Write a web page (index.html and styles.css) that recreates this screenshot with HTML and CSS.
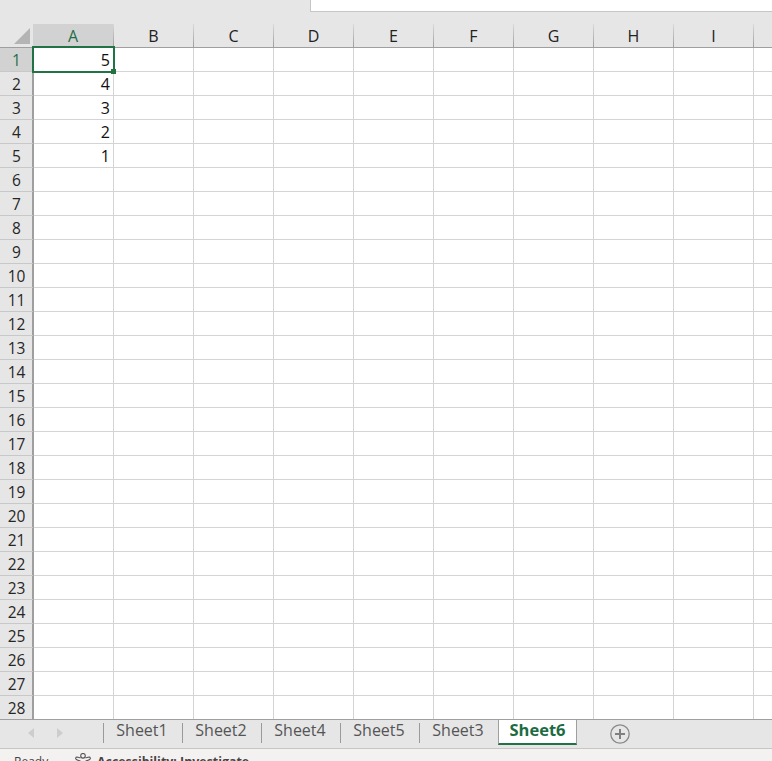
FILE: index.html
```html
<!DOCTYPE html>
<html lang="en">
<head>
<meta charset="utf-8">
<title>Workbook</title>
<link rel="stylesheet" href="styles.css">
</head>
<body>
<div class="app">
  <div class="top"><div class="formula"></div></div>
  <div class="cols">
    <div class="corner"><svg width="16" height="16" viewBox="0 0 16 16"><path d="M16 0V16H0Z" fill="#b4b4b4"/></svg></div>
    <div class="col sel">A</div><div class="col">B</div><div class="col">C</div><div class="col">D</div><div class="col">E</div><div class="col">F</div><div class="col">G</div><div class="col">H</div><div class="col">I</div><div class="col rest"></div>
  </div>
  <div class="sheet">
    <div class="row"><div class="rh sel">1</div><div class="cell active">5<span class="handle"></span></div></div>
    <div class="row"><div class="rh">2</div><div class="cell">4</div></div>
    <div class="row"><div class="rh">3</div><div class="cell">3</div></div>
    <div class="row"><div class="rh">4</div><div class="cell">2</div></div>
    <div class="row"><div class="rh">5</div><div class="cell">1</div></div>
    <div class="row"><div class="rh">6</div></div>
    <div class="row"><div class="rh">7</div></div>
    <div class="row"><div class="rh">8</div></div>
    <div class="row"><div class="rh">9</div></div>
    <div class="row"><div class="rh">10</div></div>
    <div class="row"><div class="rh">11</div></div>
    <div class="row"><div class="rh">12</div></div>
    <div class="row"><div class="rh">13</div></div>
    <div class="row"><div class="rh">14</div></div>
    <div class="row"><div class="rh">15</div></div>
    <div class="row"><div class="rh">16</div></div>
    <div class="row"><div class="rh">17</div></div>
    <div class="row"><div class="rh">18</div></div>
    <div class="row"><div class="rh">19</div></div>
    <div class="row"><div class="rh">20</div></div>
    <div class="row"><div class="rh">21</div></div>
    <div class="row"><div class="rh">22</div></div>
    <div class="row"><div class="rh">23</div></div>
    <div class="row"><div class="rh">24</div></div>
    <div class="row"><div class="rh">25</div></div>
    <div class="row"><div class="rh">26</div></div>
    <div class="row"><div class="rh">27</div></div>
    <div class="row"><div class="rh">28</div></div>
  </div>
  <div class="tabs">
    <div class="nav">
      <svg width="6" height="10" viewBox="0 0 6 10"><path d="M6 0V10L0 5Z" fill="#cdcdcd"/></svg>
      <svg width="6" height="10" viewBox="0 0 6 10"><path d="M0 0V10L6 5Z" fill="#cdcdcd"/></svg>
    </div>
    <div class="tab">Sheet1</div>
    <div class="tab">Sheet2</div>
    <div class="tab">Sheet4</div>
    <div class="tab">Sheet5</div>
    <div class="tab">Sheet3</div>
    <div class="tab on">Sheet6</div>
    <svg class="add" width="20" height="20" viewBox="0 0 20 20"><circle cx="10" cy="10" r="9.2" fill="none" stroke="#8a8a8a" stroke-width="1.3"/><path d="M10 5V15M5 10H15" stroke="#808080" stroke-width="2" fill="none"/></svg>
  </div>
  <div class="status">
    <span class="ready">Ready</span>
    <svg class="acc" width="16" height="12" viewBox="0 0 16 12"><circle cx="8" cy="2.8" r="2.3" fill="none" stroke="#555" stroke-width="1.1"/><path d="M5.5 4.6C3.5 5.2 2.2 3.4 1.1 4.3C0 5.4 1 6.8 3 7.3L5 8V12M10.5 4.6C12.5 5.2 13.8 3.4 14.9 4.3C16 5.4 15 6.8 13 7.3L11 8V12" fill="none" stroke="#555" stroke-width="1.1"/></svg>
    <span class="access">Accessibility: Investigate</span>
  </div>
</div>
</body>
</html>
```
FILE: styles.css
```css
* { box-sizing: border-box; }
html, body { margin: 0; padding: 0; }
body { width: 772px; height: 761px; overflow: hidden; background: #fff; font-family: "Open Sans", "Noto Sans", sans-serif; }
.app { width: 772px; height: 761px; display: flex; flex-direction: column; overflow: hidden; }
.top { height: 24px; flex: none; background: #e6e6e6; display: flex; justify-content: flex-end; align-items: flex-start; }
.formula { width: 462px; height: 12px; background: #fff; border-left: 1px solid #c6c6c6; border-bottom: 1px solid #c6c6c6; }
.cols { height: 24px; flex: none; display: flex; background: #e6e6e6; border-bottom: 1px solid #9f9f9f; }
.corner { width: 33px; flex: none; display: flex; justify-content: flex-end; align-items: flex-end; padding: 0 3px 3px 0; }
.col { width: 80px; flex: none; text-align: center; font-size: 16px; line-height: 24px; color: #222; border-right: 1px solid #a8a8a8; border-image: linear-gradient(#dcdcdc, #9a9a9a) 1; }
.col.sel { width: 81px; background: #d2d2d2; color: #1f6e48; }
.col.rest { width: 20px; border-right: 0; }
.sheet { height: 671px; flex: none; background-color: #fff;
  background-image: repeating-linear-gradient(to right, transparent 0, transparent 79px, #d4d4d4 79px, #d4d4d4 80px);
  background-position: 34px 0; }
.row { height: 24px; display: flex; border-bottom: 1px solid #d4d4d4; }
.rh { width: 34px; flex: none; background: #e6e6e6; padding-left: 1px; border-right: 2px solid #9f9f9f; text-align: center; font-size: 15.5px; line-height: 24px; color: #262626; margin-bottom: -1px; border-bottom: 1px solid #c8c8c8; }
.rh.sel { background: #d2d2d2; color: #1f6e48; border-right-color: #d2d2d2; }
.cell { width: 79px; flex: none; text-align: right; font-size: 16px; line-height: 24px; color: #111; padding-right: 3px; }
.cell.active { position: relative; }
.cell.active::after { content: ""; position: absolute; left: -2px; top: -2px; right: -2px; bottom: -2px; border: 2px solid #217346; }
.handle { position: absolute; z-index: 1; right: -3px; bottom: -3px; width: 5px; height: 5px; background: #217346; }
.tabs { height: 30px; flex: none; display: flex; align-items: flex-start; background: #e6e6e6; border-top: 1px solid #9f9f9f; border-bottom: 1px solid #c6c6c6; }
.nav { width: 103px; flex: none; display: flex; gap: 23px; padding: 8px 0 0 28px; }
.tab { width: 79px; height: 20px; margin-top: 3px; padding-right: 2px; border-left: 1px solid #9a9a9a; text-align: center; font-size: 16px; line-height: 14px; color: #555; }
.tab.on { height: 26px; margin-top: -1px; padding-right: 0; background: #fff; color: #1d6b43; font-size: 16.5px; font-weight: 700; border: 1px solid #9f9f9f; border-bottom: 2px solid #217346; line-height: 20px; }
.add { margin: 4px 0 0 33px; flex: none; }
.status { height: 12px; flex: none; background: #f3f2f1; display: flex; align-items: flex-start; overflow: hidden; font-size: 12px; line-height: 16px; color: #444; padding-left: 14px; }
.ready { width: 61px; flex: none; margin-top: 5px; }
.acc { flex: none; margin-top: 4px; }
.access { font-size: 12.4px; font-weight: 700; margin: 5px 0 0 6px; white-space: nowrap; }
```
